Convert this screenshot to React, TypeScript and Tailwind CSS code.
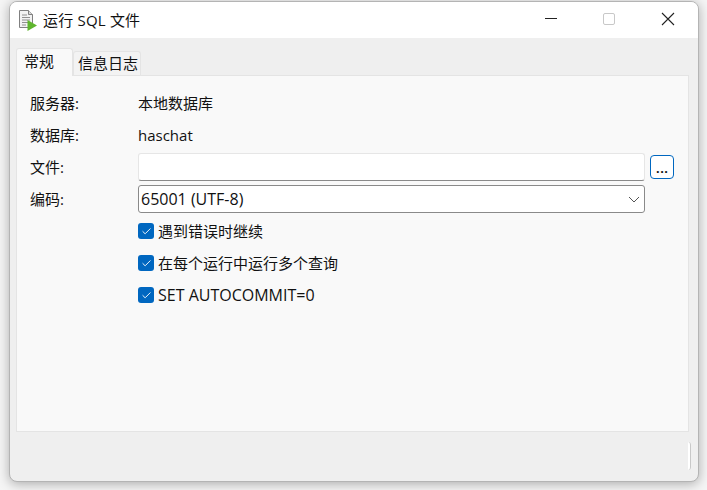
import React from 'react'
import { Check } from 'lucide-react'

const font = 'font-["Open_Sans","Noto_Sans_CJK_SC",sans-serif]'

function FileIcon() {
  return (
    <svg width="20" height="21" viewBox="0 0 20 21">
      <path d="M1.500 .5h9l4 4v13h-13z" fill="#f2f2f2" stroke="#808080" />
      <path d="M10.500 .5v4h4" fill="#d8d8d8" stroke="#808080" />
      <path d="M4 5h5M4 7.500h8M4 10h8M4 12.500h6M4 15h4" stroke="#909090" />
      <path d="M9.500 10l9.500 5.500-9.500 5.500z" fill="#5fb52e" />
    </svg>
  )
}

function Row({ label, children }: { label?: string; children: React.ReactNode }) {
  return (
    <div className="flex h-8 items-center">
      <div className="w-[108px] shrink-0">{label}</div>
      {children}
    </div>
  )
}

function CheckRow({ text, latin }: { text: string; latin?: boolean }) {
  return (
    <Row>
      <div className="flex items-center gap-1">
        <span className="flex h-4 w-4 items-center justify-center rounded-[3px] bg-[#0067c0]">
          <Check size={11} color="#fff" strokeWidth={2} />
        </span>
        <span className={latin ? 'text-[16px]' : ''}>{text}</span>
      </div>
    </Row>
  )
}

export default function App() {
  return (
    <div className={`${font} h-[490px] w-[707px] overflow-hidden bg-[#f5f5f5] pl-[9px] pt-px text-[15px] text-[#111]`}>
      <div className="flex h-[481px] w-[690px] flex-col overflow-hidden rounded-lg border border-[#b4b4b4] bg-[#efefef] shadow-[0_2px_12px_rgba(0,0,0,0.3)]">
        {/* Title bar */}
        <div className="flex h-[36px] shrink-0 items-center bg-white pl-2">
          <FileIcon />
          <span className="ml-[5px] tracking-[0.2px]">运行 SQL 文件</span>
          <div className="ml-auto flex items-center pb-[2px] pr-[23px]">
            <div className="mb-[2px] h-px w-3 bg-[#222]" />
            <div className="ml-[46px] h-3 w-3 rounded-[2px] border border-[#c8c8c8]" />
            <svg className="ml-[46px]" width="14" height="14" viewBox="0 0 14 14">
              <path d="M1 1l12 12M13 1L1 13" stroke="#222" strokeWidth="1.1" />
            </svg>
          </div>
        </div>

        {/* Tabs */}
        <div className="ml-[6px] mr-[9px] mt-[10px] flex h-[27px] shrink-0 items-end">
          <div className="relative z-10 -mb-px flex h-[28px] w-[57px] items-center rounded-t-[3px] border border-b-0 border-[#e4e4e4] bg-[#f9f9f9] pb-[3px] pl-[7px]">
            常规
          </div>
          <div className="flex h-[24px] w-[68px] items-center justify-center rounded-t-[3px] border border-b-0 border-[#e4e4e4] bg-[#f3f3f3] pl-[2px]">
            信息日志
          </div>
        </div>

        {/* Panel */}
        <div className="ml-[6px] mr-[9px] flex h-[357px] shrink-0 flex-col border border-[#e4e4e4] bg-[#f9f9f9] pl-[13px] pr-[14px] pt-[11px]">
          <Row label="服务器:">本地数据库</Row>
          <Row label="数据库:">haschat</Row>
          <Row label="文件:">
            <div className="h-7 flex-1 rounded-[3px] border border-[#e6e6e6] border-b-[#8a8a8a] bg-white" />
            <button className="ml-[5px] flex h-6 w-6 shrink-0 items-center justify-center rounded-[4px] border border-[#0067c0] bg-white font-semibold leading-none">
              ...
            </button>
          </Row>
          <Row label="编码:">
            <div className="mr-[29px] flex h-7 flex-1 items-center justify-between rounded-[3px] border border-[#8a8a8a] bg-white pl-[2px] pr-[4px]">
              <span className="text-[16px]">65001 (UTF-8)</span>
              <svg width="12" height="7" viewBox="0 0 12 7">
                <path d="M1 1l5 5 5-5" fill="none" stroke="#555" strokeWidth="1" />
              </svg>
            </div>
          </Row>
          <CheckRow text="遇到错误时继续" />
          <CheckRow text="在每个运行中运行多个查询" />
          <CheckRow text="SET AUTOCOMMIT=0" latin />
        </div>

        {/* Status bar grip */}
        <div className="flex flex-1 justify-end pr-[7px] pt-[10px]">
          <div className="h-[28px] w-[3px] rounded-r-[3px] border-r border-[#c8c8c8] bg-white" />
        </div>
      </div>
    </div>
  )
}
